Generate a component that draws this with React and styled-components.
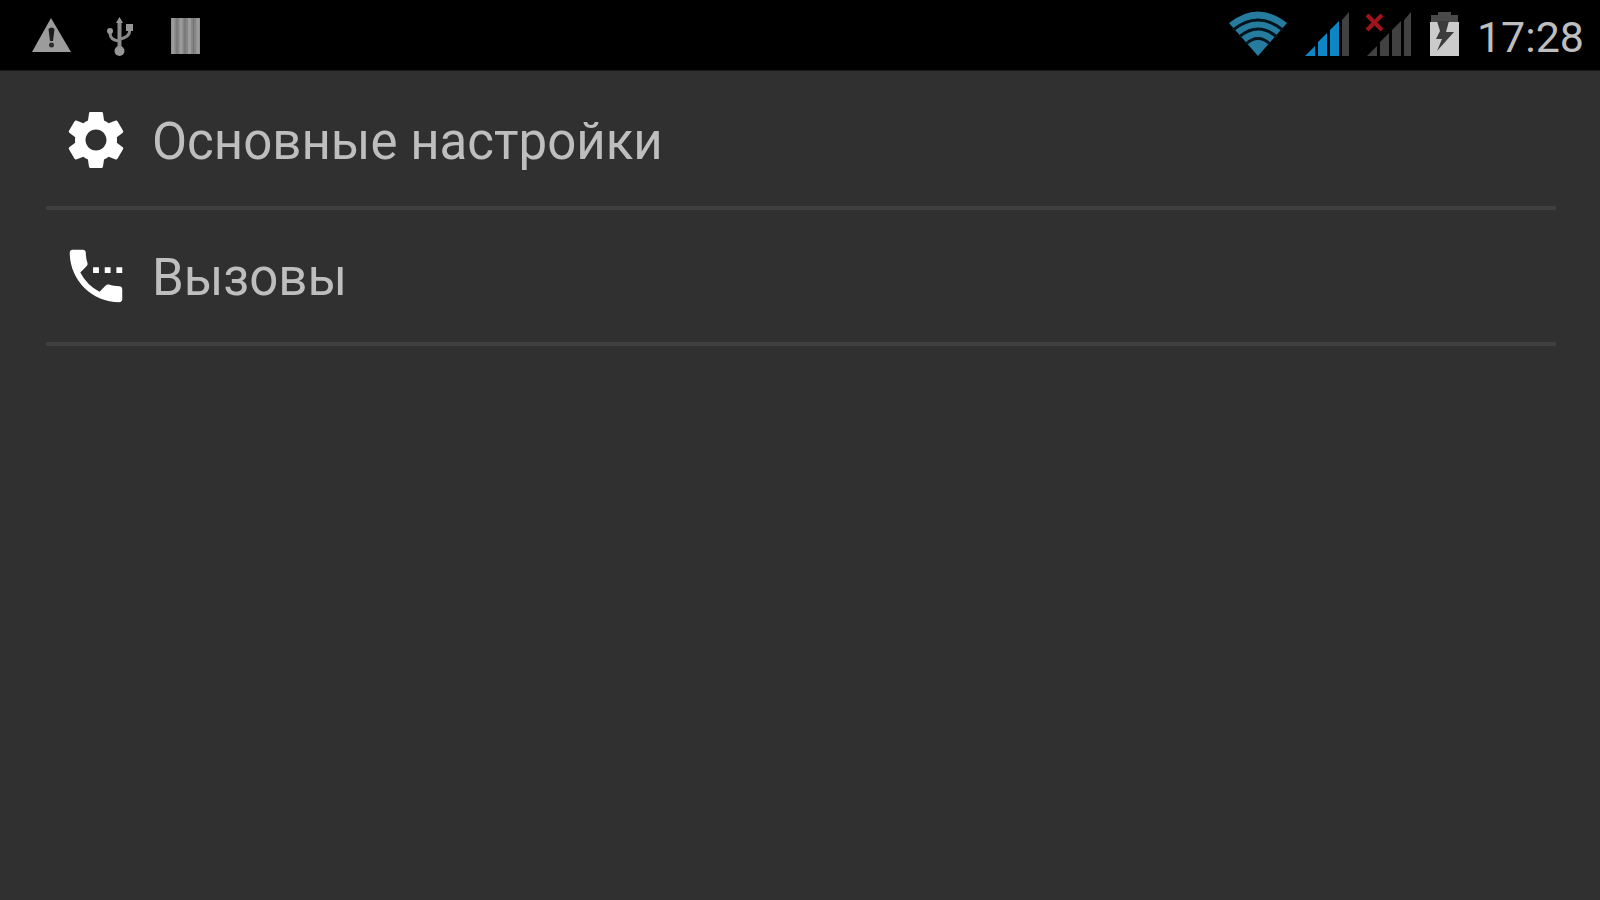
import React from 'react'
import styled, { createGlobalStyle } from 'styled-components'
import { MdSettings, MdSettingsPhone } from 'react-icons/md'

const items = [
  { id: 'general', title: 'Основные настройки', Icon: MdSettings },
  { id: 'calls', title: 'Вызовы', Icon: MdSettingsPhone }
]

const WarningIcon = () => (
  <svg width='40' height='48' viewBox='0 0 40 48' aria-hidden='true'>
    <path d='M19 7 L39 41 H0 Z' fill='#9c9c9c' />
    <path d='M16.500 18 q3 -3 6 0 L21 30 h-3 Z' fill='#1c1c1c' />
    <circle cx='19.500' cy='34' r='2.500' fill='#2c2c2c' />
  </svg>
)

const UsbIcon = () => (
  <svg width='28' height='48' viewBox='0 0 28 48' aria-hidden='true'>
    <g fill='none' stroke='#8a8a8a' strokeWidth='3'>
      <path d='M12.500 10 V40' strokeWidth='4' />
      <path d='M3 20 V22 Q3 29 12 30' />
      <path d='M22.500 18 V21 Q22 26 13 28' />
    </g>
    <g fill='#969696'>
      <path d='M12.500 6 L16 12 H9 Z' />
      <circle cx='3' cy='20' r='3' />
      <rect x='19' y='13' width='7' height='7' />
      <circle cx='12.500' cy='40' r='5' />
    </g>
  </svg>
)

const BarcodeIcon = () => (
  <svg width='31' height='48' viewBox='0 0 31 48' aria-hidden='true'>
    <rect x='1' y='7' width='29' height='36' fill='#868686' />
    <path d='M3 7V43 M11 7V43 M19.500 7V43 M28 7V43' stroke='#9c9c9c' strokeWidth='3' />
    <path d='M7 7V43 M15 7V43 M23.500 7V43' stroke='#707070' strokeWidth='1' />
  </svg>
)

const WifiIcon = () => (
  <svg width='59' height='48' viewBox='1 0 59 48' aria-hidden='true'>
    <path d='M1 12 Q30 -11 59 12 L30 45 Z' fill='#257c9f' />
    <g fill='none' stroke='#04141c' strokeWidth='3'>
      <path d='M5 19 Q30 -1 55 19' />
      <path d='M11 26 Q30 10 49 26' />
      <path d='M18 33 Q30 22 42 33' />
    </g>
  </svg>
)

const SignalBars = ({ level }) => {
  const colour = n => (n <= level ? '#0c86c4' : '#414141')
  return (
    <g>
      <path d='M1 45 L11 35 V45 Z' fill={colour(1)} />
      <path d='M14 31 L23 22 V45 H14 Z' fill={colour(2)} />
      <path d='M26 19 L35 10 V45 H26 Z' fill={colour(3)} />
      <path d='M38 9 L45 1 V45 H38 Z' fill={colour(4)} />
    </g>
  )
}

const SignalIcon = () => (
  <svg width='45' height='48' viewBox='0 0 45 48' aria-hidden='true'>
    <SignalBars level={3} />
  </svg>
)

const NoSignalIcon = () => (
  <svg width='48' height='48' viewBox='0 0 48 48' aria-hidden='true'>
    <g transform='translate(1 0)'>
      <SignalBars level={0} />
    </g>
    <path d='M2 4 L17 19 M17 4 L2 19' stroke='#a01318' strokeWidth='4' />
  </svg>
)

const BatteryIcon = () => (
  <svg width='32' height='48' viewBox='0 0 32 48' aria-hidden='true'>
    <path d='M9 1 H22 V4 H29 V12 H2 V4 H9 Z' fill='#4a4a4a' />
    <path d='M1 11 H30 V45 H1 Z' fill='#cbcbcb' />
    <path d='M8 10 H20 L17 21 H25 L8 40 L13 28 H7 L11 20 Z' fill='#3c3c3c' />
  </svg>
)

const App = () => (
  <Screen>
    <GlobalStyle />
    <StatusBar>
      <Notifications>
        <WarningIcon />
        <UsbIcon />
        <BarcodeIcon />
      </Notifications>
      <SystemIcons>
        <WifiIcon />
        <SignalIcon />
        <NoSignalIcon />
        <BatteryIcon />
        <Clock>17:28</Clock>
      </SystemIcons>
    </StatusBar>
    <Menu>
      {
        items.map(({ id, title, Icon }) => (
          <MenuItem key={id}>
            <MenuButton type='button'>
              <Icon size={70} aria-hidden='true' />
              <MenuTitle>{title}</MenuTitle>
            </MenuButton>
          </MenuItem>
        ))
      }
    </Menu>
  </Screen>
)

const GlobalStyle = createGlobalStyle`
  body {
    margin: 0;
    background-color: #303030;
    font-family: Roboto, 'Liberation Sans', sans-serif;
  }
`
const Screen = styled.div`
  min-height: 100vh;
  background-color: #303030;
`
const StatusBar = styled.header`
  display: flex;
  justify-content: space-between;
  align-items: center;
  height: 70px;
  padding: 0 16px 0 32px;
  background-color: black;
  border-bottom: 1px solid #181818;
`
const Notifications = styled.div`
  display: flex;
  align-items: center;
  gap: 35px;
`
const SystemIcons = styled.div`
  display: flex;
  align-items: center;
  gap: 16px;
`
const Clock = styled.time`
  padding-top: 4px;
  color: #bebebe;
  font-size: 43px;
  line-height: 48px;
`
const Menu = styled.ul`
  margin: 0;
  padding: 3px 44px 0 46px;
  list-style: none;
`
const MenuItem = styled.li`
  border-bottom: 4px solid #3f3f3f;
`
const MenuButton = styled.button`
  display: flex;
  align-items: center;
  gap: 21px;
  width: 100%;
  height: 132px;
  padding: 0 15px;
  border: none;
  background: none;
  color: white;
  font-family: inherit;
  text-align: left;
  cursor: pointer;
`
const MenuTitle = styled.span`
  padding-top: 4px;
  color: #bebebe;
  font-size: 51px;
  line-height: 60px;
`

export default App
